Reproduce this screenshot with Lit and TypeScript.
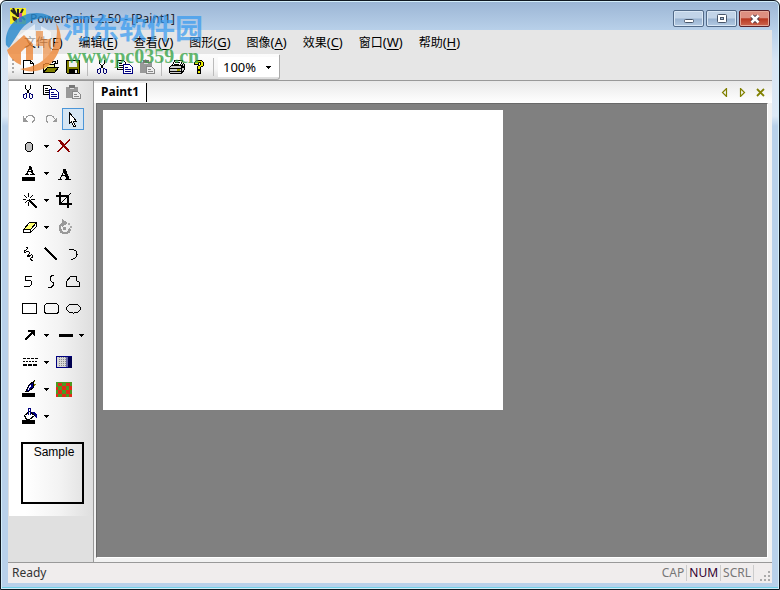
import { LitElement, html, svg, css } from "lit";
import type { TemplateResult } from "lit";
import { customElement, property } from "lit/decorators.js";
import { classMap } from "lit/directives/class-map.js";

const icons: Record<string, TemplateResult> = {
  app: svg`<rect width="16" height="16" fill="#f4ee28"/><path d="M1 2l4 4M3 0l4 8M8 1v8M13 1l-4 8" stroke="#222" stroke-width="2"/><path d="M9 5h3v9H9z" fill="#cf4a9c"/><path d="M2 8l5 2v5L3 12z" fill="#4b2a12"/><path d="M12 9l3 3" stroke="#238a45" stroke-width="2"/>`,
  fresh: svg`<path d="M2.500 1.500h7l3 3v10h-10z" fill="#fff" stroke="#000"/><path d="M9.500 1.500v3h3" fill="none" stroke="#000"/>`,
  open: svg`<path d="M0.500 13.500v-8h1l1-1h3l1 1h5v3" fill="#f2ee90" stroke="#000"/><path d="M0.500 13.500l4-5h11l-4 5z" fill="#808000" stroke="#000"/><path d="M9 3.500q2-3 4 0M14.500 1v3.500H11" fill="none" stroke="#000"/>`,
  save: svg`<path d="M1.500 1.500h13v13h-12l-1-1z" fill="#808000" stroke="#000"/><path d="M4 2h8v6H4z" fill="#efefef"/><path d="M4 10h9v5H4z" fill="#000"/><path d="M10 11h2v3h-2z" fill="#eee"/>`,
  cut: svg`<path d="M4.500 1v3l4 6M9.500 1v3l-4 6" fill="none" stroke="#000"/><path d="M5.500 9.500l-3 1v3l1 1h1l1-1zM8.500 9.500l3 1v3l-1 1h-1l-1-1z" fill="none" stroke="#000070"/>`,
  copy: svg`<path d="M0.500 1.500h6l2 2v7h-8z" fill="#fff" stroke="#000"/><path d="M2 4.500h3M2 6.500h5M2 8.500h4" stroke="#000"/><path d="M6.500 5.500h6l3 3v6h-9z" fill="#fff" stroke="#000080"/><path d="M8 8.500h3M8 10.500h6M8 12.500h6" stroke="#000080"/>`,
  paste: svg`<path d="M1 3h12v11H1z" fill="#999"/><path d="M4 1h6v3H4z" fill="#777"/><path d="M5 4h4v1H5z" fill="#ddd"/><path d="M7.500 7.500h5l3 3v4h-8z" fill="#eee" stroke="#888"/><path d="M9 10.500h3M9 12.500h5" stroke="#888"/>`,
  print: svg`<path d="M5.500 1.500h8l-2 5h-8z" fill="#fff" stroke="#000"/><path d="M6 3.500h5M5 5.500h5" stroke="#000"/><path d="M2.500 6.500h10l2-2 1 1v5l-3 4h-11l-1-1v-5z" fill="#ccc" stroke="#000"/><path d="M1 9.500h11M1 12.500h11M12.500 8v6" stroke="#000"/><path d="M8 11h3" stroke="#a0a000" stroke-width="2"/><path d="M13 6l1 3" stroke="#000" stroke-width="2"/>`,
  help: svg`<path d="M3.500 5.500v-2l2-2h5l2 2v3l-3 2v2h-3v-3l3-2v-2h-2v2z" fill="#e8e800" stroke="#000"/><path d="M6.500 11.500h3v3h-3z" fill="#e8e800" stroke="#000"/>`,
  undo: svg`<path d="M2.500 5v5H7M3 9.500l3-4q4-3 7 1v3l-2 2" fill="none" stroke="#999"/><path d="M2 6v5h5z" fill="#999"/>`,
  redo: svg`<path d="M13 9.500l-3-4q-4-3-7 1v3l2 2" fill="none" stroke="#999"/><path d="M14 6v5H9z" fill="#999"/>`,
  pointer: svg`<path d="M4.500 1.500v11l2-2 2 5h2l-2-5h3z" fill="#fff" stroke="#000"/>`,
  blob: svg`<path d="M6.500 4.500h3l2 2v5l-2 2h-3l-2-2v-5z" fill="#c0c0c0" stroke="#000"/>`,
  remove: svg`<path d="M2 2l2 0 10 12-2-1z" fill="#8b0000" stroke="#8b0000"/><path d="M14 2L8 7l-6 7" fill="none" stroke="#8b0000" stroke-width="1.500"/>`,
  fontColor: svg`<path d="M4 9.500h4M9 9.500h5M5.500 9.500l4-8M7 6.500h4" fill="none" stroke="#000"/><path d="M9 1l3 8" stroke="#000" stroke-width="2"/><path d="M1 12h13v4H1z"/>`,
  letter: svg`<path d="M2 14.500h4M9 14.500h6M4 14l5-10 3 10M6 10.500h5" fill="none" stroke="#000"/><path d="M8 4l4 10" stroke="#000" stroke-width="3"/>`,
  wand: svg`<path d="M2 7.500h3M10 7.500h4M7.500 1v4M7.500 10v4M3.500 3.500l3 3M11.500 3.500l-3 3M3.500 11.500l3-3" stroke="#000"/><path d="M8 8l8 8" stroke="#000" stroke-width="2"/>`,
  crop: svg`<path d="M4 0v12h12M0 4h12v12" fill="none" stroke="#000" stroke-width="2"/><path d="M5 11l10-10" stroke="#000"/>`,
  eraser: svg`<path d="M2.500 10.500l6-7h7v4l-6 6h-7z" fill="#fff" stroke="#000"/><path d="M4 10l5-6h6l-5 6z" fill="#ffff70"/><path d="M2.500 10.500h7l6-7M9.500 10.500v3" fill="none" stroke="#000"/>`,
  rotate: svg`<path d="M7 4.500a5 5 0 1 0 7 5" fill="none" stroke="#999" stroke-width="2.500"/><path d="M6 0l6 4-6 4z" fill="#999"/><circle cx="8.500" cy="9.500" r="1.500" fill="#999"/><path d="M12 4h2v2h-2zM14 7h2v2h-2z" fill="#aaa"/>`,
  scribble: svg`<path d="M4.500 1C7 1 7 3 5 4S3 7 5 6s4 0 3 2-3 3-1 3 2-3 4-2 0 3-1 3 0 3 2 2" fill="none" stroke="#000"/>`,
  line: svg`<path d="M2 2l12 12" stroke="#000" stroke-width="1.500"/>`,
  arc: svg`<path d="M4 3.500h4q4 1 4 5t-6 5" fill="none" stroke="#000"/>`,
  zigzag: svg`<path d="M11 3.500H4.500v4h5l1 1v3l-2 2H3" fill="none" stroke="#000"/>`,
  curve: svg`<path d="M11 2.500H9l-2 2v3l3 2v3l-2 2H5" fill="none" stroke="#000"/>`,
  polygon: svg`<path d="M5.500 3.500h6v4l3 2v4h-13v-5z" fill="none" stroke="#000"/>`,
  rect: svg`<path d="M1.500 3.500h14v10h-14z" fill="none" stroke="#000"/>`,
  round: svg`<rect x="1.500" y="3.500" width="14" height="10" rx="3" fill="none" stroke="#000"/>`,
  ellipse: svg`<ellipse cx="8.500" cy="8.500" rx="7" ry="4.500" fill="none" stroke="#000"/>`,
  arrow: svg`<path d="M4 13l9-9" stroke="#000" stroke-width="2"/><path d="M7 3h7v7l-2-2V5H7z"/>`,
  stroke: svg`<path d="M3 7h14v3H3z"/>`,
  dashes: svg`<path d="M2 4.500h15" stroke="#000" stroke-dasharray="3 1"/><path d="M2 7.500h15" stroke="#000" stroke-dasharray="2 1"/><path d="M2 11h15" stroke="#000" stroke-dasharray="4 1" stroke-width="2"/>`,
  pattern: svg`<path d="M.5 2.500h15v11H.5z" fill="#d8d8d8" stroke="#000080"/><path d="M3.500 3v10M5.500 3v10M7.500 3v10M9.500 3v10" stroke="#888" stroke-dasharray="1 1"/><path d="M10 3h2v10h-2z" fill="#6668a8"/><path d="M12 3h4v11h-4z" fill="#000050"/>`,
  brush: svg`<path d="M14 0l-4 5M15 3l-4 3" stroke="#808000"/><path d="M13 0L8 4 5 10h3l4-3z" fill="#000080" stroke="#000"/><path d="M10 4l-3 5" stroke="#fff"/><path d="M1 12h13v4H1z"/>`,
  texture: svg`<path d="M0 1h16v15H0z" fill="#4c9a20"/><path d="M2 2h4v3H2zM10 2h4v3h-4zM6 5h4v4H6zM13 5h3v4h-3zM0 6h2v3H0zM2 9h4v4H2zM10 9h4v4h-4zM6 13h4v3H6zM13 13h3v3h-3zM0 13h2v3H0z" fill="#e32a18"/>`,
  bucket: svg`<path d="M3.500 7.500l5-4 5 4-5 4h-3z" fill="#fff" stroke="#000"/><path d="M7.500 7V.5h2v6" fill="none" stroke="#000080"/><path d="M11 4h3l2 3v4l-2-3z" fill="#000080"/><path d="M1 12h13v4H1z"/>`,
};

const caret = html`<svg class="caret" viewBox="0 0 5 3" aria-hidden="true"><path d="M0 0h5L2.500 3z" /></svg>`;

@customElement("tool-button")
export class ToolButton extends LitElement {
  static styles = css`
    :host { display: block; flex: none; width: 22px; height: 22px; }
    button {
      display: grid; place-items: center; box-sizing: border-box; width: 100%; height: 100%;
      padding: 0; border: 1px solid transparent; background: none;
    }
    .on { border-color: #4c96d8; background: #d5e5f3; }
    svg { width: 16px; height: 16px; shape-rendering: crispEdges; overflow: visible; }
  `;
  @property() icon = "";
  @property({ type: Boolean }) selected = false;

  render() {
    return html`<button class=${classMap({ on: this.selected })} aria-label=${this.icon} aria-pressed=${this.selected ? "true" : "false"}>
      <svg viewBox="0 0 16 16" fill="#000">${icons[this.icon]}</svg>
    </button>`;
  }
}

const menus = [
  ["文件", "F"], ["编辑", "E"], ["查看", "V"], ["图形", "G"],
  ["图像", "A"], ["效果", "C"], ["窗口", "W"], ["帮助", "H"],
];

const toolRows = [
  ["cut", "copy", "paste"], ["undo", "redo", "pointer"], ["blob", "▾", "remove"],
  ["fontColor", "▾", "letter"], ["wand", "▾", "crop"], ["eraser", "▾", "rotate"],
  ["scribble", "line", "arc"], ["zigzag", "curve", "polygon"], ["rect", "round", "ellipse"],
  ["arrow", "▾", "stroke", "▾"], ["dashes", "▾", "pattern"], ["brush", "▾", "texture"], ["bucket", "▾"],
];

@customElement("app-root")
export class AppRoot extends LitElement {
  static styles = css`
    :host {
      display: block; height: 100vh; color: #000;
      font: 12px/16px "Noto Sans", "Noto Sans CJK SC", sans-serif;
    }
    button, select { font: inherit; color: inherit; }
    button { padding: 0; border: 0; background: none; }
    .window {
      position: relative; display: flex; flex-direction: column; box-sizing: border-box; height: 100%;
      padding: 0 6px 6px; border: 1px solid #101820; border-radius: 6px 6px 0 0;
      background: linear-gradient(#9bb5d4, #b9d1ea 30px, #d8e5f4 60px, #dde9f6 115px, #b9d1ea 125px);
      box-shadow: inset 0 0 0 1px #d4eefa, inset 0 -1px 0 1px #6fd0e6;
    }
    .title { display: flex; align-items: center; flex: none; height: 29px; padding: 0 3px; }
    .title .logo { width: 16px; height: 16px; margin-right: 4px; }
    h1 { flex: 1; margin: 6px 0 0; font-size: 12px; font-weight: 400; line-height: 16px; color: #1c2430; }
    .controls { display: flex; gap: 2px; margin-top: 6px; }
    .controls button {
      display: grid; place-items: center; box-sizing: border-box; width: 31px; height: 17px;
      border: 1px solid #526a88; border-radius: 2px; box-shadow: inset 0 0 0 1px #d9e7f5;
      background: linear-gradient(#c2d4e8 48%, #98b2d0 52%, #b4cbe3);
    }
    .controls .close { border-color: #5a2028; box-shadow: inset 0 0 0 1px #e4a898; background: linear-gradient(#dd8f80 45%, #b83820 52%, #cd6650); }
    .controls svg { width: 12px; height: 10px; }
    .client { display: flex; flex-direction: column; flex: 1; min-height: 0; margin: 0 1px; background: #e6e6e6; }
    .menu { display: flex; gap: 16px; flex: none; height: 24px; padding: 0 16px; }
    .menu button { white-space: nowrap; }
    .menu .key { font-size: 13px; }
    .menu u { text-underline-offset: 2px; }
    .bar {
      display: flex; align-items: center; align-self: flex-start; flex: none; height: 25px;
      margin-bottom: 1px; border-radius: 0 0 3px 0; background: linear-gradient(#fcfcfc, #f6f6f6 60%, #dcdcdc);
      box-shadow: 1px 1px 0 #aaa;
    }
    .grip { width: 2px; height: 16px; margin: 0 4px; background: repeating-linear-gradient(#aaa 0 2px, transparent 2px 4px); }
    .sep { width: 1px; height: 18px; margin: 0 4px 0 3px; background: #bbb; }
    .zoom { display: flex; align-items: center; position: relative; width: 61px; height: 20px; background: #fff; }
    .zoom select { width: 100%; height: 20px; padding: 0 5px; border: 0; background: none; appearance: none; font-size: 13px; }
    .zoom .caret { position: absolute; right: 8px; top: 9px; }
    .caret { width: 5px; height: 3px; shape-rendering: crispEdges; }
    .body { display: flex; flex: 1; min-height: 0; border-top: 1px solid #999; border-bottom: 1px solid #999; }
    .side { flex: none; width: 84px; padding-left: 1px; border-right: 1px solid #999; background: #e0e0e0; }
    .tools { padding: 0 0 12px 9px; background: linear-gradient(90deg, #fff 20%, #f3f3f3 60%, #dedede); }
    .rows { display: grid; gap: 5px; }
    .row { display: flex; height: 22px; }
    .drop { display: grid; place-items: center; width: 13px; height: 22px; }
    .sample {
      box-sizing: border-box; width: 63px; height: 62px; margin: 15px 0 0 3px; border: 2px solid #000;
      font: 12px/16px "Liberation Sans", sans-serif; text-align: center; padding-left: 3px;
    }
    .work { display: flex; flex-direction: column; flex: 1; min-width: 0; padding: 0 4px 4px 2px; background: #f2f2f2; }
    .tabs { display: flex; flex: none; align-items: center; height: 22px; background: linear-gradient(#e9e9e9, #fff); margin: 0 -4px 0 -2px; padding-right: 4px; }
    .tab { height: 19px; padding: 0 7px; border-right: 1px solid #000; background: #fff; font-weight: 700; }
    .nav { display: flex; gap: 2px; margin-left: auto; }
    .nav button { display: grid; place-items: center; width: 16px; height: 16px; }
    .nav svg { width: 9px; height: 9px; }
    .canvas { flex: 1; min-height: 0; overflow: hidden; padding: 6px; border: 1px solid; border-color: #696969 #fff #fff #696969; background: #808080; }
    .paper { width: 400px; height: 300px; background: #fff; }
    .status { display: flex; align-items: center; flex: none; height: 20px; padding: 0 2px 0 4px; background: #f0eded; color: #333; }
    .ready { flex: 1; }
    .lock { padding: 0 2px; border-right: 1px solid #ccc; color: #777; }
    .lock.on { color: #300030; }
    .status svg { width: 10px; height: 10px; margin: 6px 0 0 6px; shape-rendering: crispEdges; }
    .mark { position: absolute; left: 4px; top: 10px; display: flex; pointer-events: none; }
    .mark svg { width: 58px; height: 62px; }
    .words { display: flex; flex-direction: column; white-space: nowrap; }
    .name { color: #3399f0; opacity: .7; font: 700 28px/32px "Noto Sans CJK SC", sans-serif; }
    .site { color: #30a040; opacity: .75; font: 700 20px/22px "Liberation Serif", serif; margin: 2px 0 0 4px; }
  `;

  private tool(name: string) {
    return name === "▾"
      ? html`<button class="drop" aria-label="options">${caret}</button>`
      : html`<tool-button icon=${name} ?selected=${name === "pointer"}></tool-button>`;
  }

  render() {
    return html`
      <div class="window">
        <header class="title">
          <svg class="logo" viewBox="0 0 16 16" fill="none">${icons.app}</svg>
          <h1>PowerPaint 2.50 - [Paint1]</h1>
          <div class="controls">
            <button aria-label="Minimize"><svg viewBox="0 0 12 10"><rect x="1.500" y="5.500" width="9" height="3" rx="1" fill="#fff" stroke="#48566a" /></svg></button>
            <button aria-label="Restore"><svg viewBox="0 0 12 10"><rect x="1.500" y=".5" width="9" height="8" rx="1" fill="#fff" stroke="#48566a" /><rect x="4.500" y="3.500" width="3" height="2" fill="#a8bed6" stroke="#48566a" /></svg></button>
            <button class="close" aria-label="Close"><svg viewBox="0 0 12 10"><path d="M3 2l6 6M9 2L3 8" stroke="#4b3744" stroke-width="4.500" /><path d="M2.500 1.500l7 7M9.500 1.500l-7 7" stroke="#fff" stroke-width="2.500" /></svg></button>
          </div>
        </header>
        <div class="client">
          <nav class="menu">
            ${menus.map(([label, key]) => html`<button>${label}<span class="key">(<u>${key}</u>)</span></button>`)}
          </nav>
          <div class="bar" role="toolbar">
            <span class="grip"></span>
            ${["fresh", "open", "save", "|", "cut", "copy", "paste", "|", "print", "help", "|"].map((n) =>
              n === "|" ? html`<span class="sep"></span>` : this.tool(n))}
            <div class="zoom"><select aria-label="Zoom"><option>100%</option></select>${caret}</div>
          </div>
          <div class="body">
            <aside class="side">
              <div class="tools">
                <div class="rows">${toolRows.map((r) => html`<div class="row">${r.map((n) => this.tool(n))}</div>`)}</div>
                <div class="sample">Sample</div>
              </div>
            </aside>
            <main class="work">
              <div class="tabs">
                <button class="tab">Paint1</button>
                <div class="nav">
                  <button aria-label="Previous"><svg viewBox="0 0 9 9"><path d="M6.500 .5v8l-4-4z" fill="none" stroke="#808000" stroke-width="1.200" /></svg></button>
                  <button aria-label="Next"><svg viewBox="0 0 9 9"><path d="M2.500 .5v8l4-4z" fill="none" stroke="#808000" stroke-width="1.200" /></svg></button>
                  <button aria-label="Close tab"><svg viewBox="0 0 9 9"><path d="M1 1l7 7M8 1L1 8" stroke="#808000" stroke-width="1.800" /></svg></button>
                </div>
              </div>
              <div class="canvas"><div class="paper"></div></div>
            </main>
          </div>
          <footer class="status">
            <span class="ready">Ready</span>
            ${["CAP", "NUM", "SCRL"].map((k) => html`<span class=${classMap({ lock: true, on: k === "NUM" })}>${k}</span>`)}
            <svg viewBox="0 0 10 10" fill="#aaa"><path d="M8 0h2v2H8zM4 4h2v2H4zM8 4h2v2H8zM0 8h2v2H0zM4 8h2v2H4zM8 8h2v2H8z" /></svg>
          </footer>
        </div>
        <div class="mark">
          <svg viewBox="0 0 58 62" opacity=".8">
            <path d="M1 34C-1 18 11 2 32 2c8 0 14 3 18 7C34 4 22 10 15 20L4 37z" fill="#2488cc" />
            <path d="M12 26L30 13v12h6V15l10 6v20l-9 5V33H26v15l-10-5V30z" fill="#fff" opacity=".75" />
            <path d="M2 39l17-15 9 9v16h-7V36l-5 5v13C9 51 4 46 2 39z" fill="#ee8736" />
            <path d="M51 12c9 13 5 33-8 43-8 6-19 7-28 3 15-2 26-8 32-19 5-9 6-18 4-27z" fill="#ee8736" />
            <path d="M31 20h7v8h8v24l-8 4V35h-7z" fill="#ee8736" opacity=".8" />
          </svg>
          <div class="words"><span class="name">河东软件园</span><span class="site">www.pc0359.cn</span></div>
        </div>
      </div>
    `;
  }
}
